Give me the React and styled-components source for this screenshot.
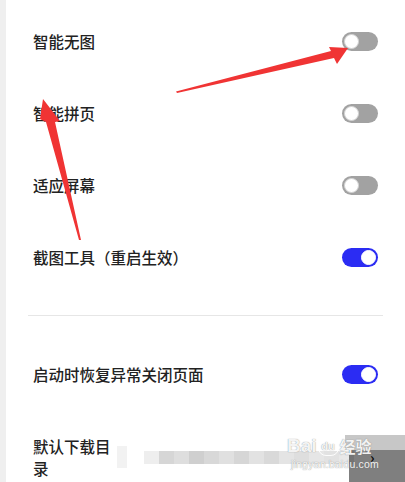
import React from 'react';
import styled, { createGlobalStyle } from 'styled-components';

const GlobalStyle = createGlobalStyle`
    html, body {
        margin: 0;
        padding: 0;
        background: #ffffff;
    }
    body {
        font-family: 'Noto Sans CJK SC', 'Noto Sans', sans-serif;
    }
`;

const Page = styled.div`
    position: relative;
    width: 405px;
    height: 482px;
    overflow: hidden;
    display: flex;
    background: #ffffff;
`;

const Strip = styled.div`
    width: 6px;
    flex-shrink: 0;
    background: #efefef;
`;

const Content = styled.div`
    flex: 1;
    padding: 5px 27px 0 27px;
    display: flex;
    flex-direction: column;
    & > * {
        flex-shrink: 0;
    }
`;

const Row = styled.div`
    display: flex;
    align-items: center;
    padding: 25px 0;
    gap: 6px;
`;

const Label = styled.div`
    flex: ${(p) => (p.$width ? 'none' : '1')};
    width: ${(p) => (p.$width ? `${p.$width}px` : 'auto')};
    font-size: 15.5px;
    line-height: 22px;
    font-weight: 500;
    color: #222222;
`;

const Track = styled.div`
    width: 36px;
    height: 19px;
    border-radius: 10px;
    flex-shrink: 0;
    background: ${(p) => (p.$on ? '#2b2cf3' : '#a2a2a2')};
    display: flex;
    align-items: center;
    justify-content: ${(p) => (p.$on ? 'flex-end' : 'flex-start')};
    padding: 0 2px;
    box-sizing: border-box;
`;

const Knob = styled.div`
    width: 15px;
    height: 15px;
    border-radius: 50%;
    background: #ffffff;
    box-sizing: border-box;
    border: 1px solid ${(p) => (p.$on ? '#ffffff' : '#d4d4d4')};
`;

const Divider = styled.div`
    height: 1px;
    background: #e6e6e6;
    margin: 22px -5px 22px -5px;
`;

const Mosaic = styled.div`
    flex: 1;
    display: flex;
    align-items: center;
    height: 13px;
`;

const Block = styled.div`
    width: ${(p) => p.$w || 15}px;
    height: ${(p) => p.$h || 13}px;
    flex-shrink: 0;
    background: ${(p) => p.$c};
`;

const Chevron = styled.div`
    width: 8px;
    font-size: 14px;
    font-weight: 700;
    color: #111;
    line-height: 1;
`;

const Annotation = styled.svg`
    position: absolute;
    left: 0;
    top: 0;
    pointer-events: none;
`;

const Watermark = styled.div`
    position: absolute;
    right: 0;
    bottom: 0;
    width: 60px;
    height: 47px;
    display: flex;
    flex-direction: column;
`;

const ShadeLight = styled.div`
    height: 15px;
    background: rgba(0, 0, 0, 0.22);
`;

const ShadeDark = styled.div`
    flex: 1;
    margin-left: 4px;
    background: rgba(0, 0, 0, 0.5);
`;

const Brand = styled.div`
    position: absolute;
    left: 287px;
    top: 435px;
    display: flex;
    flex-direction: column;
    align-items: flex-start;
    color: rgba(255, 255, 255, 0.92);
    text-shadow: 0 0 1px rgba(110, 110, 110, 0.9);
    pointer-events: none;
`;

const BrandTop = styled.div`
    display: flex;
    align-items: center;
    gap: 1px;
    font-family: 'Liberation Sans', 'Noto Sans CJK SC', sans-serif;
    font-size: 19px;
    line-height: 22px;
    font-weight: 700;
`;

const BrandCjk = styled.span`
    font-family: 'Noto Sans CJK SC', sans-serif;
    font-size: 16px;
`;

const Paw = styled.span`
    display: inline-flex;
    align-items: center;
    justify-content: center;
    width: 19px;
    height: 17px;
    border-radius: 8px;
    border: 1.5px solid rgba(255, 255, 255, 0.9);
    font-size: 11px;
    line-height: 1;
`;

const BrandSub = styled.div`
    font-family: 'Liberation Sans', sans-serif;
    font-size: 10.5px;
    line-height: 14px;
    margin-left: 4px;
    letter-spacing: 0.2px;
`;

const toggles = [
    { label: '智能无图', on: false },
    { label: '智能拼页', on: false },
    { label: '适应屏幕', on: false },
    { label: '截图工具（重启生效）', on: true },
];

const mosaic = [
    { c: '#f2f2f2', w: 10, h: 22 },
    { c: '#ffffff', w: 17 },
    { c: '#eeeeee' },
    { c: '#d6d6d6' },
    { c: '#dedede' },
    { c: '#cfcfcf' },
    { c: '#d8d8d8' },
    { c: '#e0e0e0' },
    { c: '#d6d6d6' },
    { c: '#e2e2e2' },
    { c: '#d9d9d9' },
    { c: '#e4e4e4' },
    { c: '#dedede' },
    { c: '#e6e6e6' },
    { c: '#e2e2e2' },
    { c: '#e8e8e8' },
];

function Toggle({ on }) {
    return (
        <Track $on={on}>
            <Knob $on={on} />
        </Track>
    );
}

export default function App() {
    return (
        <Page>
            <GlobalStyle />
            <Strip />
            <Content>
                {toggles.map((t) => (
                    <Row key={t.label}>
                        <Label>{t.label}</Label>
                        <Toggle on={t.on} />
                    </Row>
                ))}
                <Divider />
                <Row>
                    <Label>启动时恢复异常关闭页面</Label>
                    <Toggle on />
                </Row>
                <Row>
                    <Label $width={78}>默认下载目录</Label>
                    <Mosaic>
                        {mosaic.map((b, i) => (
                            <Block key={i} $c={b.c} $w={b.w} $h={b.h} />
                        ))}
                    </Mosaic>
                    <Chevron>›</Chevron>
                </Row>
            </Content>

            <Watermark>
                <ShadeLight />
                <ShadeDark />
            </Watermark>
            <Brand>
                <BrandTop>
                    <span>Bai</span>
                    <Paw>du</Paw>
                    <BrandCjk>经验</BrandCjk>
                </BrandTop>
                <BrandSub>jingyan.baidu.com</BrandSub>
            </Brand>

            <Annotation width="405" height="482" viewBox="0 0 405 482">
                <polygon
                    fill="#f03434"
                    points="176,91.5 331,51 329,47 348,48 337,64 334,58 177,93"
                />
                <polygon
                    fill="#f03434"
                    points="43,99 60,121 55,122 81,240 79,240 46,122 40,119"
                />
            </Annotation>
        </Page>
    );
}
